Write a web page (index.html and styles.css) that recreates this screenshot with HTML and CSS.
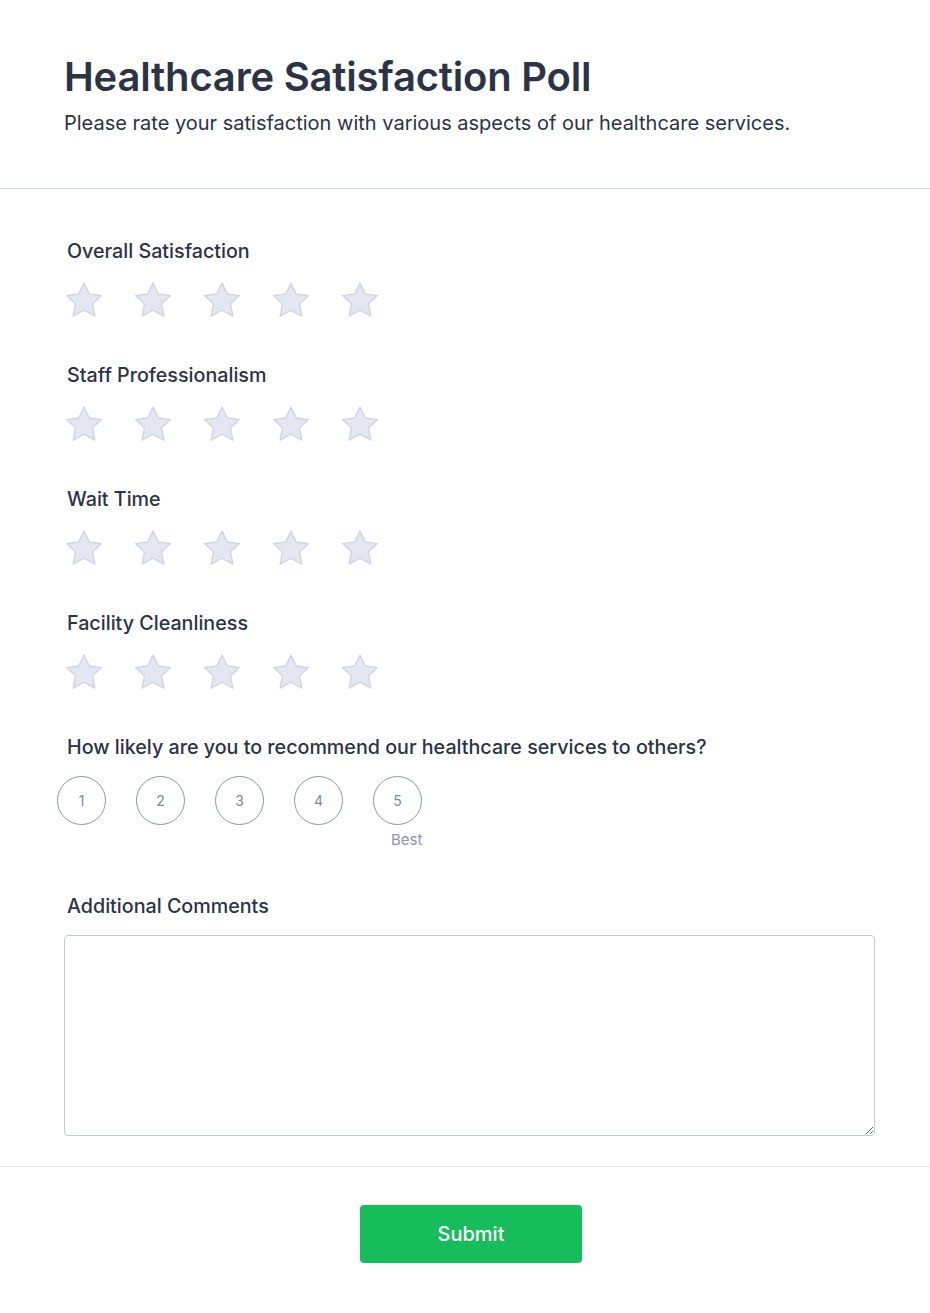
FILE: index.html
```html
<!DOCTYPE html>
<html lang="en">
<head>
<meta charset="utf-8">
<title>Healthcare Satisfaction Poll</title>
<link rel="stylesheet" href="styles.css">
</head>
<body>
<div class="page">
  <header class="header">
    <h1 class="title">Healthcare Satisfaction Poll</h1>
    <p class="subtitle">Please rate your satisfaction with various aspects of our healthcare services.</p>
  </header>
  <main class="form">
    <section class="field">
      <div class="label">Overall Satisfaction</div>
      <div class="stars">
        <svg class="star" viewBox="0 0 40 38"><path d="M20 1.2 L25.6 12.7 L38.4 14.3 L29 23.1 L31.5 36 L20 29.8 L8.5 36 L11 23.1 L1.6 14.3 L14.4 12.7 Z"/></svg>
        <svg class="star" viewBox="0 0 40 38"><path d="M20 1.2 L25.6 12.7 L38.4 14.3 L29 23.1 L31.5 36 L20 29.8 L8.5 36 L11 23.1 L1.6 14.3 L14.4 12.7 Z"/></svg>
        <svg class="star" viewBox="0 0 40 38"><path d="M20 1.2 L25.6 12.7 L38.4 14.3 L29 23.1 L31.5 36 L20 29.8 L8.5 36 L11 23.1 L1.6 14.3 L14.4 12.7 Z"/></svg>
        <svg class="star" viewBox="0 0 40 38"><path d="M20 1.2 L25.6 12.7 L38.4 14.3 L29 23.1 L31.5 36 L20 29.8 L8.5 36 L11 23.1 L1.6 14.3 L14.4 12.7 Z"/></svg>
        <svg class="star" viewBox="0 0 40 38"><path d="M20 1.2 L25.6 12.7 L38.4 14.3 L29 23.1 L31.5 36 L20 29.8 L8.5 36 L11 23.1 L1.6 14.3 L14.4 12.7 Z"/></svg>
      </div>
    </section>
    <section class="field">
      <div class="label">Staff Professionalism</div>
      <div class="stars">
        <svg class="star" viewBox="0 0 40 38"><path d="M20 1.2 L25.6 12.7 L38.4 14.3 L29 23.1 L31.5 36 L20 29.8 L8.5 36 L11 23.1 L1.6 14.3 L14.4 12.7 Z"/></svg>
        <svg class="star" viewBox="0 0 40 38"><path d="M20 1.2 L25.6 12.7 L38.4 14.3 L29 23.1 L31.5 36 L20 29.8 L8.5 36 L11 23.1 L1.6 14.3 L14.4 12.7 Z"/></svg>
        <svg class="star" viewBox="0 0 40 38"><path d="M20 1.2 L25.6 12.7 L38.4 14.3 L29 23.1 L31.5 36 L20 29.8 L8.5 36 L11 23.1 L1.6 14.3 L14.4 12.7 Z"/></svg>
        <svg class="star" viewBox="0 0 40 38"><path d="M20 1.2 L25.6 12.7 L38.4 14.3 L29 23.1 L31.5 36 L20 29.8 L8.5 36 L11 23.1 L1.6 14.3 L14.4 12.7 Z"/></svg>
        <svg class="star" viewBox="0 0 40 38"><path d="M20 1.2 L25.6 12.7 L38.4 14.3 L29 23.1 L31.5 36 L20 29.8 L8.5 36 L11 23.1 L1.6 14.3 L14.4 12.7 Z"/></svg>
      </div>
    </section>
    <section class="field">
      <div class="label">Wait Time</div>
      <div class="stars">
        <svg class="star" viewBox="0 0 40 38"><path d="M20 1.2 L25.6 12.7 L38.4 14.3 L29 23.1 L31.5 36 L20 29.8 L8.5 36 L11 23.1 L1.6 14.3 L14.4 12.7 Z"/></svg>
        <svg class="star" viewBox="0 0 40 38"><path d="M20 1.2 L25.6 12.7 L38.4 14.3 L29 23.1 L31.5 36 L20 29.8 L8.5 36 L11 23.1 L1.6 14.3 L14.4 12.7 Z"/></svg>
        <svg class="star" viewBox="0 0 40 38"><path d="M20 1.2 L25.6 12.7 L38.4 14.3 L29 23.1 L31.5 36 L20 29.8 L8.5 36 L11 23.1 L1.6 14.3 L14.4 12.7 Z"/></svg>
        <svg class="star" viewBox="0 0 40 38"><path d="M20 1.2 L25.6 12.7 L38.4 14.3 L29 23.1 L31.5 36 L20 29.8 L8.5 36 L11 23.1 L1.6 14.3 L14.4 12.7 Z"/></svg>
        <svg class="star" viewBox="0 0 40 38"><path d="M20 1.2 L25.6 12.7 L38.4 14.3 L29 23.1 L31.5 36 L20 29.8 L8.5 36 L11 23.1 L1.6 14.3 L14.4 12.7 Z"/></svg>
      </div>
    </section>
    <section class="field">
      <div class="label">Facility Cleanliness</div>
      <div class="stars">
        <svg class="star" viewBox="0 0 40 38"><path d="M20 1.2 L25.6 12.7 L38.4 14.3 L29 23.1 L31.5 36 L20 29.8 L8.5 36 L11 23.1 L1.6 14.3 L14.4 12.7 Z"/></svg>
        <svg class="star" viewBox="0 0 40 38"><path d="M20 1.2 L25.6 12.7 L38.4 14.3 L29 23.1 L31.5 36 L20 29.8 L8.5 36 L11 23.1 L1.6 14.3 L14.4 12.7 Z"/></svg>
        <svg class="star" viewBox="0 0 40 38"><path d="M20 1.2 L25.6 12.7 L38.4 14.3 L29 23.1 L31.5 36 L20 29.8 L8.5 36 L11 23.1 L1.6 14.3 L14.4 12.7 Z"/></svg>
        <svg class="star" viewBox="0 0 40 38"><path d="M20 1.2 L25.6 12.7 L38.4 14.3 L29 23.1 L31.5 36 L20 29.8 L8.5 36 L11 23.1 L1.6 14.3 L14.4 12.7 Z"/></svg>
        <svg class="star" viewBox="0 0 40 38"><path d="M20 1.2 L25.6 12.7 L38.4 14.3 L29 23.1 L31.5 36 L20 29.8 L8.5 36 L11 23.1 L1.6 14.3 L14.4 12.7 Z"/></svg>
      </div>
    </section>
    <section class="field field-scale">
      <div class="label">How likely are you to recommend our healthcare services to others?</div>
      <div class="scale">
        <div class="scale-item"><span class="circle">1</span></div>
        <div class="scale-item"><span class="circle">2</span></div>
        <div class="scale-item"><span class="circle">3</span></div>
        <div class="scale-item"><span class="circle">4</span></div>
        <div class="scale-item"><span class="circle">5</span><span class="best">Best</span></div>
      </div>
    </section>
    <section class="field field-comments">
      <div class="label">Additional Comments</div>
      <textarea class="comments"></textarea>
    </section>
  </main>
  <footer class="footer">
    <button class="submit" type="button">Submit</button>
  </footer>
</div>
</body>
</html>
```
FILE: styles.css
```css
* { box-sizing: border-box; }
html, body { margin: 0; padding: 0; background: #ffffff; }
body {
  font-family: Inter, "Noto Sans", "Liberation Sans", sans-serif;
  color: #2c3345;
}
.page { width: 930px; }
.header {
  padding: 55px 64px 0 64px;
  height: 189px;
  border-bottom: 1px solid #d8dbea;
}
.title {
  margin: 0;
  font-size: 40px;
  line-height: 44px;
  font-weight: 600;
  letter-spacing: -0.2px;
  color: #2c3345;
}
.subtitle {
  margin: 11px 0 0 0;
  font-size: 20px;
  line-height: 26px;
  font-weight: 400;
  color: #2c3345;
}
.form {
  padding: 49px 64px 30px 64px;
  display: flex;
  flex-direction: column;
}
.field { height: 124px; padding-left: 3px; }
.label {
  font-size: 19.7px;
  line-height: 26px;
  font-weight: 500;
  color: #2c3345;
}
.stars {
  display: flex;
  gap: 31px;
  margin-top: 18px;
  margin-left: -2px;
}
.star { width: 38px; height: 36px; display: block; }
.star path {
  fill: #e4e7f1;
  stroke: #cfd3e3;
  stroke-width: 1.4;
  stroke-linejoin: round;
}
.field-scale { height: 159px; padding-left: 3px; }
.scale {
  display: flex;
  gap: 30px;
  margin-top: 16px;
  margin-left: -10px;
}
.scale-item {
  position: relative;
  width: 49px;
  height: 49px;
}
.circle {
  display: flex;
  align-items: center;
  justify-content: center;
  width: 49px;
  height: 49px;
  border: 1px solid #8b94ab;
  border-radius: 50%;
  font-size: 14px;
  color: #7f89a0;
}
.best {
  position: absolute;
  top: 54px;
  left: 18px;
  font-size: 15px;
  color: #8a96a8;
}
.field-comments { height: auto; padding-left: 0; }
.field-comments .label { padding-left: 3px; }
.comments {
  display: block;
  margin-top: 16px;
  width: 811px;
  height: 201px;
  border: 1px solid #c3c8d8;
  border-radius: 4px;
  resize: vertical;
  font-family: inherit;
  font-size: 16px;
  padding: 10px;
  outline: none;
}
.footer {
  border-top: 1px solid #e6e8f3;
  display: flex;
  justify-content: center;
  padding: 38px 0 50px 12px;
}
.submit {
  width: 222px;
  height: 58px;
  background: #18bd5b;
  color: #ffffff;
  border: none;
  border-radius: 4px;
  font-family: inherit;
  font-size: 20px;
  font-weight: 500;
  cursor: pointer;
}
```
